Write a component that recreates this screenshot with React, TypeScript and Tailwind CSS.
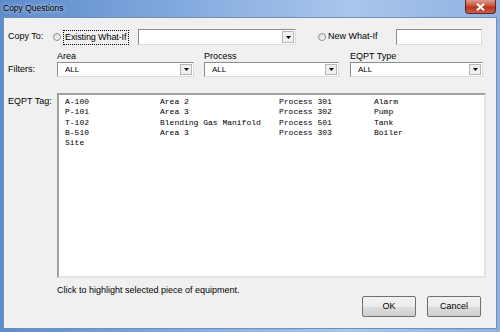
import React from 'react';

const uiFont = { fontFamily: '"Liberation Sans", Arial, sans-serif' };

const rows = [
  ['A-100', 'Area 2', 'Process 301', 'Alarm'],
  ['P-101', 'Area 3', 'Process 302', 'Pump'],
  ['T-102', 'Blending Gas Manifold', 'Process 501', 'Tank'],
  ['B-510', 'Area 3', 'Process 303', 'Boiler'],
  ['Site', '', '', ''],
];

const Radio = ({ className = '' }: { className?: string }) => (
  <span
    className={`block w-[8px] h-[8px] rounded-full border border-[#8e8f8f] bg-[linear-gradient(135deg,#d8d8d8,#ffffff)] shrink-0 ${className}`}
  />
);

const DropArrow = () => (
  <span className="w-[12px] h-full border border-[#b5b5b5] bg-[#efefef] flex items-center justify-center shrink-0">
    <svg width="5" height="3" viewBox="0 0 5 3">
      <path d="M0 0h5L2.5 3z" fill="#000" />
    </svg>
  </span>
);

const Combo = ({ value, className }: { value: string; className: string }) => (
  <div
    className={`h-[15px] flex items-stretch bg-white border border-t-[#8c8c8c] border-l-[#8c8c8c] border-b-[#dcdcdc] border-r-[#dcdcdc] ${className}`}
  >
    <span className="flex-1 pl-[7px] text-[8px] leading-[13px] text-black">{value}</span>
    <div className="p-[1px] flex">
      <DropArrow />
    </div>
  </div>
);

const FilterCol = ({ label, width }: { label: string; width: string }) => (
  <div className="flex flex-col">
    <span className="h-[11px] leading-[11px] text-[9px] text-black whitespace-nowrap">{label}</span>
    <Combo value="ALL" className={width} />
  </div>
);

const Button = ({ label }: { label: string }) => (
  <button className="w-[54px] h-[21px] border border-[#707070] rounded-[2px] bg-[linear-gradient(#f2f2f2,#ebebeb_50%,#dddddd_51%,#cfcfcf)] text-[9px] text-black">
    {label}
  </button>
);

export default function App() {
  return (
    <div
      className="w-[500px] h-[332px] flex flex-col bg-[linear-gradient(90deg,#5d8bcc,#87ade0_40%,#a9c6ec_70%,#8fb2e2)] overflow-hidden"
      style={uiFont}
    >
      {/* title bar */}
      <div className="h-[17px] relative flex items-center shrink-0">
        <span className="pl-[3px] text-[8.5px] text-black [text-shadow:0_0_4px_#ffffff]">Copy Questions</span>
        <div className="absolute right-[4px] top-0 w-[31px] h-[14px] rounded-b-[4px] border border-t-0 border-[#5d2323] bg-[linear-gradient(#e09a8c,#c7513f_45%,#b33420_55%,#c8604a)] flex items-center justify-center">
          <svg width="9" height="8" viewBox="0 0 9 8">
            <path d="M1 0.8L8 7.2M8 0.8L1 7.2" stroke="#fff" strokeWidth="2" />
          </svg>
        </div>
      </div>

      {/* client area */}
      <div className="mx-[3px] mb-[3px] flex-1 bg-[#f0f0f0] border border-[#6f8fbb] flex flex-col pl-[4px]">
        {/* copy to row */}
        <div className="mt-[11px] h-[16px] flex items-center">
          <span className="w-[45px] text-[9px] text-black whitespace-nowrap">Copy To:</span>
          <Radio />
          <span className="ml-[2px] w-[66px] h-[15px] border border-dotted border-black text-[9px] leading-[13px] pl-[1px] text-black whitespace-nowrap overflow-hidden tracking-[-0.1px]">
            Existing What-If
          </span>
          <Combo value="" className="ml-[9px] w-[158px] h-[16px]" />
          <Radio className="ml-[22px]" />
          <span className="ml-[2px] w-[68px] text-[9px] text-black whitespace-nowrap">New What-If</span>
          <div className="w-[86px] h-[16px] bg-white border border-t-[#8c8c8c] border-l-[#8c8c8c] border-b-[#dcdcdc] border-r-[#dcdcdc]" />
        </div>

        {/* filters row */}
        <div className="mt-[6px] flex items-end">
          <span className="w-[49px] h-[15px] flex items-center text-[9px] text-black">Filters:</span>
          <FilterCol label="Area" width="w-[137px]" />
          <div className="ml-[10px]">
            <FilterCol label="Process" width="w-[135px]" />
          </div>
          <div className="ml-[11px]">
            <FilterCol label="EQPT Type" width="w-[133px]" />
          </div>
        </div>

        {/* equipment list */}
        <div className="mt-[16px] flex">
          <span className="w-[49px] pt-[3px] text-[9px] leading-[11px] text-black whitespace-nowrap">EQPT Tag:</span>
          <div className="w-[429px] h-[185px] bg-white border-2 border-t-[#a0a0a0] border-l-[#a0a0a0] border-b-[#e3e3e3] border-r-[#e3e3e3] pt-[2px] pl-[6px]">
            {rows.map((r) => (
              <div
                key={r[0]}
                className="grid grid-cols-[95px_119px_95px_1fr] text-[8px] leading-[10.3px] text-black"
                style={{ fontFamily: '"Liberation Mono", "Courier New", monospace' }}
              >
                {r.map((c, i) => (
                  <span key={i} className="whitespace-pre">
                    {c}
                  </span>
                ))}
              </div>
            ))}
          </div>
        </div>

        {/* footer */}
        <div className="mt-[7px] pl-[49px] text-[9px] leading-[11px] text-black">
          Click to highlight selected piece of equipment.
        </div>
        <div className="flex justify-end gap-[11px] pr-[15px]">
          <Button label="OK" />
          <Button label="Cancel" />
        </div>
      </div>
    </div>
  );
}
